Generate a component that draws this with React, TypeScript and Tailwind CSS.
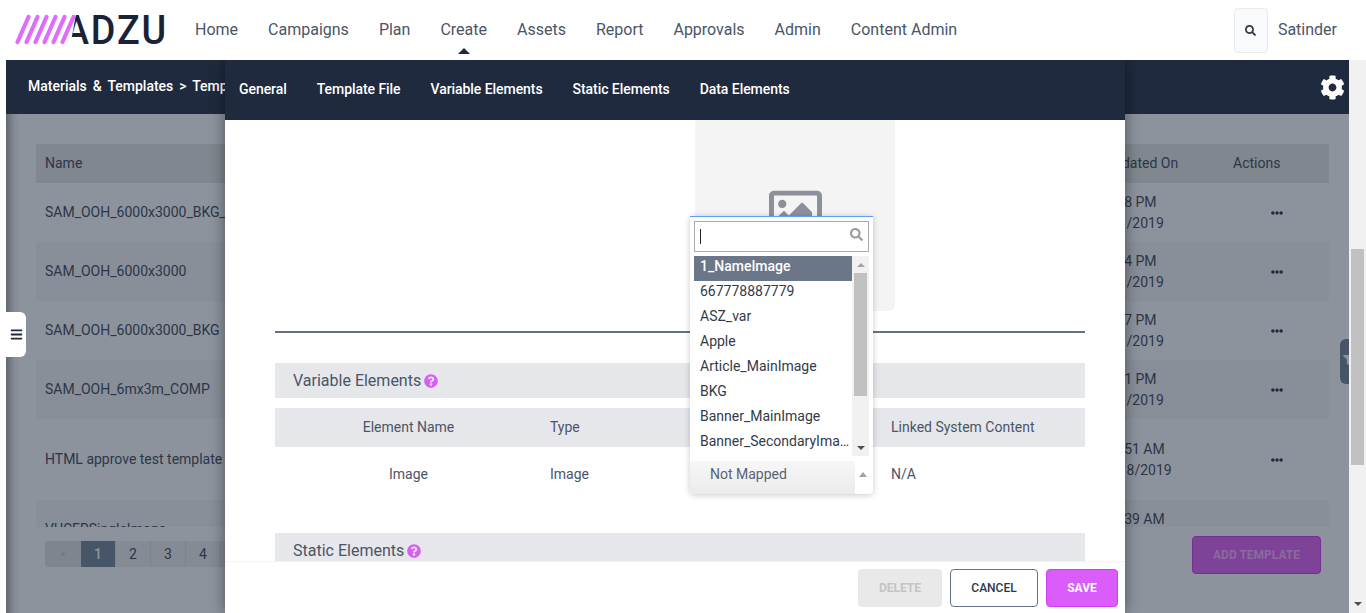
import React from "react";
import { FaBars, FaCog, FaEllipsisH, FaFilter, FaQuestionCircle, FaRegImage, FaSearch } from "react-icons/fa";

const navItems = ["Home", "Campaigns", "Plan", "Create", "Assets", "Report", "Approvals", "Admin", "Content Admin"];
const tabs = ["General", "Template File", "Variable Elements", "Static Elements", "Data Elements"];
const options = ["1_NameImage", "667778887779", "ASZ_var", "Apple", "Article_MainImage", "BKG", "Banner_MainImage", "Banner_SecondaryImage"];

const rows = [
  { name: "SAM_OOH_6000x3000_BKG_COMP", time: "1:38 PM", date: "1/1/2019", h: "h-[59px]", alt: false },
  { name: "SAM_OOH_6000x3000", time: "1:34 PM", date: "1/1/2019", h: "h-[59px]", alt: true },
  { name: "SAM_OOH_6000x3000_BKG", time: "1:27 PM", date: "1/1/2019", h: "h-[59px]", alt: false },
  { name: "SAM_OOH_6mx3m_COMP", time: "1:21 PM", date: "1/1/2019", h: "h-[59px]", alt: true },
  { name: "HTML approve test template", time: "11:51 AM", date: "1/18/2019", h: "h-[81px]", alt: false },
  { name: "VUCERSingleImage", time: "11:39 AM", date: "1/18/2019", h: "h-[59px]", alt: true },
];

function Logo() {
  return (
    <div className="flex items-center ml-[15px] w-[180px]">
      <svg width="60" height="32" viewBox="0 0 60 32" className="shrink-0 relative z-10">
        {[0, 1, 2, 3, 4, 5].map((i) => (
          <line key={i} x1={2.5 + i * 9} y1="28" x2={13.5 + i * 9} y2="3" stroke="#e06cff" strokeWidth="4.2" strokeLinecap="round" />
        ))}
      </svg>
      {/* the last stripe stands in for the left leg of the A */}
      <span className="-ml-[11px] text-[41px] leading-none font-medium text-[#1a2238] tracking-[2px] scale-x-[0.92] origin-left">
        <span className="inline-block [clip-path:polygon(48%_0,100%_0,100%_100%,20%_100%)]">A</span>DZU
      </span>
    </div>
  );
}

function TopNav() {
  return (
    <header className="relative z-10 h-[60px] shrink-0 bg-white flex items-center">
      <Logo />
      <nav className="flex gap-[30px] text-base text-[#4a5568]">
        {navItems.map((item) => (
          <a key={item} className="relative">
            {item}
            {item === "Create" && (
              <span className="absolute left-1/2 -ml-[6px] top-[30px] w-0 h-0 border-x-[6px] border-x-transparent border-b-[6px] border-b-[#1f2a3e]" />
            )}
          </a>
        ))}
      </nav>
      <div className="ml-auto flex items-center mr-[29px]">
        <div className="w-[34px] h-[45px] bg-[#f9fafb] border border-[#e9eaec] rounded-sm flex items-center justify-center text-[#2d3748]">
          <FaSearch size={11} />
        </div>
        <span className="ml-[10px] text-base text-[#4a5568]">Satinder</span>
      </div>
    </header>
  );
}

function BackgroundTable() {
  return (
    <div className="flex-1 min-h-0 bg-[#8d939d] px-[30px] pt-[30px] shadow-[inset_14px_0_10px_-10px_rgba(0,0,0,0.35)] relative flex flex-col">
      <div className="h-[383px] overflow-hidden mr-[-10px] text-sm text-[#2c3647]">
        <div className="h-[39px] bg-[#81878f] flex items-center pl-[9px] pb-[2px]">
          <span className="flex-1">Name</span>
          <span className="w-[128px]">Updated On</span>
          <span className="w-[96px]">Actions</span>
        </div>
        {rows.map((row) => (
          <div key={row.name} className={`${row.h} ${row.alt ? "bg-[#898f99]" : ""} flex items-center pl-[9px]`}>
            <span className="flex-1 pb-[2px]">{row.name}</span>
            <div className="w-[128px] leading-[21px] pt-[1px]">
              <div>{row.time}</div>
              <div>{row.date}</div>
            </div>
            <div className="w-[96px] pl-[38px] text-[#1f2a3e]">
              <FaEllipsisH size={12} />
            </div>
          </div>
        ))}
      </div>
      <div className="flex items-start justify-between mt-[14px] mr-[-10px]">
        <div className="ml-[9px] flex h-[26px] rounded-sm bg-[#858b95] text-sm text-[#2c3647]">
          <span className="w-[36px] flex items-center justify-center text-[10px] text-[#6d7380] bg-[#7f858f] rounded-l-sm">«</span>
          <span className="w-[34px] flex items-center justify-center bg-[#475569] text-[#8d939d] font-medium">1</span>
          {["2", "3", "4", "5"].map((p) => (
            <span key={p} className="w-[35px] flex items-center justify-center border-l border-[#7d838d]">{p}</span>
          ))}
        </div>
        <button className="w-[129px] h-[38px] bg-[#7e4299] border border-[#742e96] rounded-sm text-xs font-bold text-[#8a6a9f] -mt-[5px] mr-[8px]">
          ADD TEMPLATE
        </button>
      </div>
      <div className="absolute left-0 top-[198px] w-[20px] h-[45px] bg-white rounded-r-md flex items-center justify-center text-[#1f2a3e]">
        <FaBars size={13} />
      </div>
      <div className="absolute right-0 top-[225px] w-[9px] h-[45px] bg-[#475569] rounded-l-md overflow-hidden text-[#8d939d]">
        <FaFilter size={10} className="ml-[3px] mt-[16px]" />
      </div>
    </div>
  );
}

function MappingDropdown() {
  return (
    <div className="absolute left-[690px] top-[216px] w-[183px] h-[278px] bg-white border-t border-t-[#5b9dff] rounded-b-sm shadow-[0_1px_6px_rgba(0,0,0,0.22)] flex flex-col text-sm text-[#333b48]">
      <div className="mx-1 mt-1 h-[31px] border border-[#aaaaaa] flex items-center justify-between pl-[5px] pr-[5px]">
        <span className="w-px h-[15px] bg-[#222222]" />
        <FaSearch size={13} className="text-[#9a9a9a] mb-[5px]" />
      </div>
      <div className="mx-1 mt-1 h-[200px] flex overflow-hidden">
        <ul className="w-[158px] shrink-0">
          {options.map((opt, i) => (
            <li
              key={opt}
              className={`h-[25px] leading-[21px] pl-[6px] pr-[2px] truncate ${i === 0 ? "bg-[#6b7688] text-white font-medium" : ""}`}
            >
              {opt}
            </li>
          ))}
        </ul>
        <div className="w-[17px] bg-[#f1f1f1] flex flex-col items-center">
          <span className="mt-[7px] w-0 h-0 border-x-[4px] border-x-transparent border-b-[4px] border-b-[#a3a3a3]" />
          <span className="mt-[6px] w-[13px] h-[123px] bg-[#c1c1c1]" />
          <span className="mt-auto mb-[6px] w-0 h-0 border-x-[4px] border-x-transparent border-t-[4px] border-t-[#505050]" />
        </div>
      </div>
      <div className="mt-auto h-[33px] flex items-center">
        <div className="w-[165px] h-full bg-gradient-to-b from-[#f7f7f7] to-[#ebebeb] pl-5 leading-[27px] text-[#5b6270] rounded-bl-sm">
          Not Mapped
        </div>
        <span className="ml-[4px] mb-[7px] w-0 h-0 border-x-[4px] border-x-transparent border-b-[5px] border-b-[#a3a3a3]" />
      </div>
    </div>
  );
}

function EditDrawer() {
  return (
    <div className="absolute left-[225px] top-[60px] bottom-0 w-[900px] bg-white flex flex-col shadow-[0_0_14px_rgba(0,0,0,0.45)]">
      <div className="h-[60px] shrink-0 bg-[#1f2a3e] flex items-center pl-[14px] pb-[2px] gap-[30px] text-sm font-medium tracking-[-0.06px] text-white">
        {tabs.map((tab) => (
          <span key={tab}>{tab}</span>
        ))}
      </div>

      <div className="flex-1 min-h-0 overflow-hidden pl-[50px] pr-[40px] text-sm text-[#4a5568]">
        <div className="ml-[420px] w-[200px] h-[191px] bg-[#f4f4f5] rounded-br-md flex justify-center pt-[64px] text-[#8b909b]">
          <FaRegImage size={53} />
        </div>
        <div className="mt-5 h-[2px] bg-[#667080]" />

        <div className="mt-[30px] h-[35px] bg-[#e6e7ea] flex items-center pl-[18px] gap-[3px] text-base">
          Variable Elements
          <FaQuestionCircle size={14} className="text-[#d95cf5]" />
        </div>
        <div className="mt-[10px] h-[39px] bg-[#e6e7ea] flex items-center pb-[2px]">
          <span className="w-[267px] text-center">Element Name</span>
          <span className="w-[46px] ml-[8px]">Type</span>
          <span className="ml-[295px]">Linked System Content</span>
        </div>
        <div className="h-[54px] flex items-center">
          <span className="w-[267px] text-center">Image</span>
          <span className="w-[46px] ml-[8px]">Image</span>
          <span className="ml-[295px]">N/A</span>
        </div>

        <div className="mt-[32px] h-[35px] bg-[#e6e7ea] flex items-center pl-[18px] gap-[3px] text-base">
          Static Elements
          <FaQuestionCircle size={14} className="text-[#d95cf5]" />
        </div>
      </div>

      <div className="h-[52px] shrink-0 bg-white border-t border-[#f3f4f6] flex justify-end items-start pt-[7px] pr-[7px] gap-2 text-xs">
        <button className="w-[84px] h-[38px] bg-[#e9e9e9] rounded-sm font-bold text-[#c4c4c4]">DELETE</button>
        <button className="w-[88px] h-[38px] bg-white border border-[#64748b] rounded-sm font-medium text-[#2d3748]">CANCEL</button>
        <button className="w-[72px] h-[38px] bg-[#d95cfb] border border-[#cf3ff5] rounded-sm font-bold text-white">SAVE</button>
      </div>
    </div>
  );
}

export default function App() {
  return (
    <div className="relative w-[1366px] h-[613px] overflow-hidden bg-white flex flex-col font-['Roboto',sans-serif]">
      <TopNav />
      <div className="flex-1 min-h-0 flex">
        <div className="w-[6px] shrink-0 bg-white" />
        <main className="flex-1 min-w-0 flex flex-col">
          <div className="h-[54px] shrink-0 bg-[#1f2a3e] flex items-center justify-between pl-[22px] pr-[4px] text-sm font-medium text-white">
            <span className="whitespace-nowrap pb-[2px] [word-spacing:2.5px]">Materials &amp; Templates &gt; Templates</span>
            <FaCog size={25} />
          </div>
          <BackgroundTable />
        </main>
        <div className="w-[17px] shrink-0 bg-[#f1f1f1] flex flex-col items-center">
          <span className="mt-[189px] w-[13px] h-[216px] bg-[#c1c1c1]" />
          <span className="mt-auto mb-[7px] w-0 h-0 border-x-[4px] border-x-transparent border-t-[4px] border-t-[#505050]" />
        </div>
      </div>
      <EditDrawer />
      <MappingDropdown />
    </div>
  );
}
